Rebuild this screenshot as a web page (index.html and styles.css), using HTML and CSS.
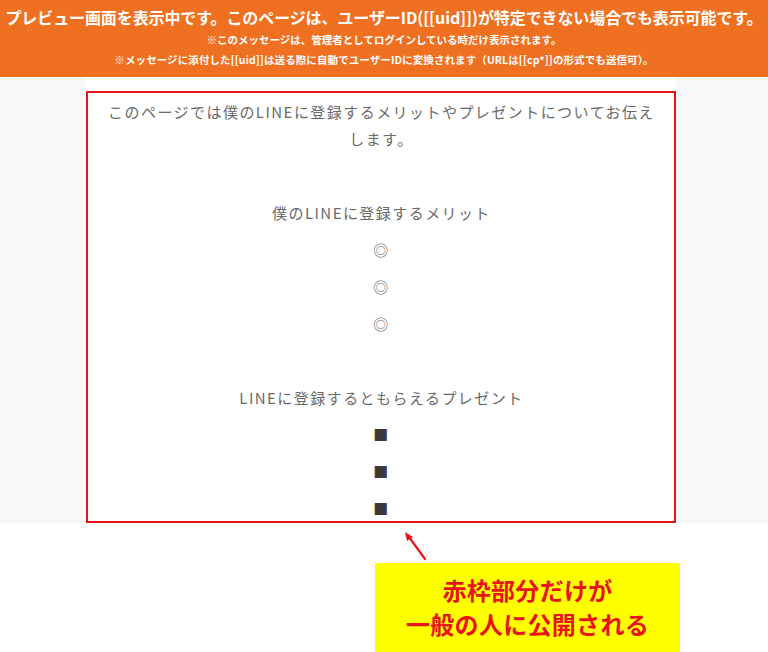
FILE: index.html
```html
<!DOCTYPE html>
<html lang="ja">
<head>
<meta charset="utf-8">
<title>プレビュー</title>
<link rel="stylesheet" href="styles.css">
</head>
<body>
<div class="preview-bar">
  <div class="bar-main">プレビュー画面を表示中です。このページは、ユーザーID([[uid]])が特定できない場合でも表示可能です。</div>
  <div class="bar-note1">※このメッセージは、管理者としてログインしている時だけ表示されます。</div>
  <div class="bar-note2">※メッセージに添付した[[uid]]は送る際に自動でユーザーIDに変換されます（URLは[[cp*]]の形式でも送信可）。</div>
</div>
<div class="page">
  <div class="content">
    <div class="text">
      <p>このページでは僕のLINEに登録するメリットやプレゼントについてお伝えします。</p>
      <p class="blank"></p>
      <p>僕のLINEに登録するメリット</p>
      <p>◎</p>
      <p>◎</p>
      <p>◎</p>
      <p class="blank"></p>
      <p>LINEに登録するともらえるプレゼント</p>
      <p class="sq">■</p>
      <p class="sq">■</p>
      <p class="sq">■</p>
    </div>
    <div class="red-frame"></div>
  </div>
</div>
<div class="annotation">
  <svg class="arrow" width="34" height="36" viewBox="0 0 34 36">
    <line x1="27" y1="31" x2="11" y2="9" stroke="#e8141c" stroke-width="2.2" stroke-linecap="round"/>
    <polygon points="7,4 15,9 9,13" fill="#e8141c"/>
  </svg>
  <div class="callout">
    <div>赤枠部分だけが</div>
    <div>一般の人に公開される</div>
  </div>
</div>
</body>
</html>
```
FILE: styles.css
```css
html, body {
  margin: 0;
  padding: 0;
  background: #ffffff;
}
body {
  width: 768px;
  height: 652px;
  overflow: hidden;
  font-family: "Noto Sans CJK JP", "Noto Sans", sans-serif;
}
.preview-bar {
  background: #f07021;
  color: #ffffff;
  font-weight: bold;
  text-align: center;
  height: 77px;
  box-sizing: border-box;
  padding-top: 5px;
}
.bar-main {
  font-size: 16px;
  line-height: 24px;
  letter-spacing: -0.1px;
}
.bar-note1 {
  font-size: 10.5px;
  line-height: 20px;
  margin-top: 1px;
}
.bar-note2 {
  font-size: 10.5px;
  line-height: 19px;
  letter-spacing: 0.1px;
}
.page {
  background: #f8f8f8;
  height: 446px;
  padding-left: 85px;
  box-sizing: border-box;
}
.content {
  position: relative;
  width: 591px;
  height: 446px;
  background: #ffffff;
  overflow: hidden;
}
.text {
  padding: 21px 18px 0 20px;
  color: #6a6a6a;
  font-size: 15px;
  letter-spacing: 1.45px;
  text-align: center;
}
.text p {
  margin: 0 0 10px;
  line-height: 27px;
  min-height: 27px;
}
.text p.sq {
  color: #3a3a3a;
}
.red-frame {
  position: absolute;
  left: 1px;
  top: 14px;
  right: 0;
  bottom: 0;
  border: 2px solid #e8141c;
}
.annotation {
  position: relative;
  height: 129px;
  padding-top: 40px;
  padding-left: 375px;
  box-sizing: border-box;
}
.arrow {
  position: absolute;
  left: 398px;
  top: 5px;
}
.callout {
  width: 305px;
  height: 89px;
  background: #ffff00;
  color: #e8141c;
  font-weight: bold;
  font-size: 24px;
  line-height: 34px;
  letter-spacing: 0.3px;
  text-align: center;
  padding-top: 10px;
  box-sizing: border-box;
}
```
